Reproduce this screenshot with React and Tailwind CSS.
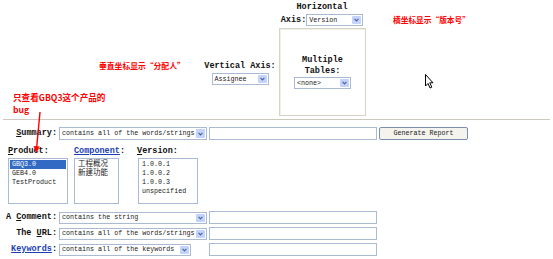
import React from 'react';

const mono = "font-['Liberation_Mono','Noto_Sans_CJK_SC',monospace]";
const label = `${mono} text-[8.5px] font-bold leading-[11px] text-[#111]`;

const Select = ({ value, className }) => (
  <div className={`flex items-stretch border border-[#a9bbd4] bg-white ${className}`}>
    <span className={`${mono} flex flex-1 items-center overflow-hidden whitespace-nowrap pl-[2px] text-[6.7px] text-[#222]`}>
      {value}
    </span>
    <span className="m-[1px] flex w-[9px] items-center justify-center rounded-[1px] bg-[#c3d3fb]">
      <svg width="5" height="4" viewBox="0 0 5 4">
        <path d="M0.6 0.8 L2.5 2.8 L4.4 0.8" stroke="#4a6495" strokeWidth="1.2" fill="none" />
      </svg>
    </span>
  </div>
);

const TextBox = ({ className }) => (
  <div className={`border border-[#a9bbd4] bg-white ${className}`} />
);

const ListBox = ({ items, selected, className, itemClass = 'text-[6.7px]' }) => (
  <div className={`border border-[#a9bbd4] bg-white p-[1px] ${className}`}>
    {items.map((item) => (
      <div
        key={item}
        className={`${mono} whitespace-nowrap pl-[2px] leading-[9px] ${itemClass} ${
          item === selected ? 'bg-[#316ac5] text-white' : 'text-[#222]'
        }`}
      >
        {item}
      </div>
    ))}
  </div>
);

const Note = ({ children, className }) => (
  <div
    className={`absolute font-['Noto_Sans_CJK_SC',sans-serif] font-bold leading-[12px] text-[#ff0000] ${className}`}
  >
    {children}
  </div>
);

export default function App() {
  return (
    <div className="relative h-[259px] w-[553px] overflow-hidden bg-white">
      {/* axis table */}
      <div className="h-[119px] pl-[202px] pt-[2px]">
        <div className="grid grid-cols-[76px_88px] grid-rows-[26px_88px]">
          <div />
          <div className="flex flex-col items-center">
            <div className={label}>Horizontal</div>
            <div className="mt-[1px] flex items-center">
              <span className={label}>Axis:</span>
              <Select value="Version" className="h-[12px] w-[57px]" />
            </div>
          </div>
          <div className="flex flex-col items-center justify-center pt-[2px]">
            <div className={label}>Vertical Axis:</div>
            <Select value="Assignee" className="mt-[1px] h-[12px] w-[57px]" />
          </div>
          <div className="ml-[1px] flex w-[87px] flex-col items-center justify-center border border-[#d6d3c8] shadow-[inset_1px_1px_0_#f0efe8]">
            <div className={label}>Multiple</div>
            <div className={label}>Tables:</div>
            <Select value="<none>" className="h-[12px] w-[57px]" />
          </div>
        </div>
      </div>

      <div className="mx-[3px] h-[1px] bg-[#cdcabd]" />

      {/* search form */}
      <div className="pt-[7px]">
        <div className="grid grid-cols-[57px_152px_170px_auto] items-center">
          <div className={`${label} text-right`}>
            <span className="underline">S</span>ummary:
          </div>
          <Select value="contains all of the words/strings" className="ml-[2px] h-[13px] w-[148px]" />
          <TextBox className="h-[13px] w-[168px]" />
          <button className={`${mono} h-[13px] w-[89px] rounded-[2px] border border-[#7d8fae] bg-[#f4f3ee] text-[6.7px] leading-[11px] text-[#222]`}>
            Generate Report
          </button>
        </div>

        <div className="mt-[6px] flex">
          <div className="ml-[8px] flex flex-col">
            <div className={label}>
              <span className="underline">P</span>roduct:
            </div>
            <ListBox
              items={['GBQ3.0', 'GEB4.0', 'TestProduct']}
              selected="GBQ3.0"
              className="mt-[1px] h-[46px] w-[60px]"
            />
          </div>
          <div className="ml-[6px] flex flex-col">
            <div className={label}>
              <span className="text-[#1c3fb5] underline">Component</span>:
            </div>
            <ListBox
              items={['工程概况', '新建功能']}
              itemClass="text-[7.5px]"
              className="mt-[1px] h-[46px] w-[45px]"
            />
          </div>
          <div className="ml-[12px] flex flex-col">
            <div className={label}>
              <span className="underline">V</span>ersion:
            </div>
            <ListBox
              items={['1.0.0.1', '1.0.0.2', '1.0.0.3', 'unspecified']}
              className="ml-[1px] mt-[1px] h-[46px] w-[60px]"
            />
          </div>
        </div>

        <div className="mt-[7px] grid grid-cols-[57px_152px_170px] items-center gap-y-[3px]">
          <div className={`${label} text-right`}>
            A <span className="underline">C</span>omment:
          </div>
          <Select value="contains the string" className="ml-[2px] h-[12px] w-[148px]" />
          <TextBox className="h-[13px] w-[168px]" />

          <div className={`${label} text-right`}>
            The <span className="underline">U</span>RL:
          </div>
          <Select value="contains all of the words/strings" className="ml-[2px] h-[12px] w-[148px]" />
          <TextBox className="h-[13px] w-[168px]" />

          <div className={`${label} text-right`}>
            <span className="text-[#1c3fb5] underline">Keywords</span>:
          </div>
          <Select value="contains all of the keywords" className="ml-[2px] h-[12px] w-[132px]" />
          <TextBox className="h-[13px] w-[168px]" />
        </div>
      </div>

      {/* annotations */}
      <Note className="left-[99px] top-[60px] text-[7.8px]">垂直坐标显示“分配人”</Note>
      <Note className="left-[393px] top-[14px] text-[7.7px]">横坐标显示“版本号”</Note>
      <Note className="left-[13px] top-[91px] text-[8.6px]">
        只查看GBQ3这个产品的
        <br />
        bug
      </Note>

      <svg className="absolute left-0 top-0" width="553" height="259">
        <line x1="40" y1="112" x2="36.6" y2="148" stroke="#ff0000" strokeWidth="1.4" />
        <polygon points="33.5,146 39.8,146.6 36.2,153" fill="#ff0000" />
        <path
          d="M425.5 74.5 L425.5 86 L428 83.5 L430 88 L431.8 87.2 L429.8 82.8 L433 82.8 Z"
          fill="#fff"
          stroke="#000"
          strokeWidth="1"
          strokeLinejoin="round"
        />
      </svg>
    </div>
  );
}
